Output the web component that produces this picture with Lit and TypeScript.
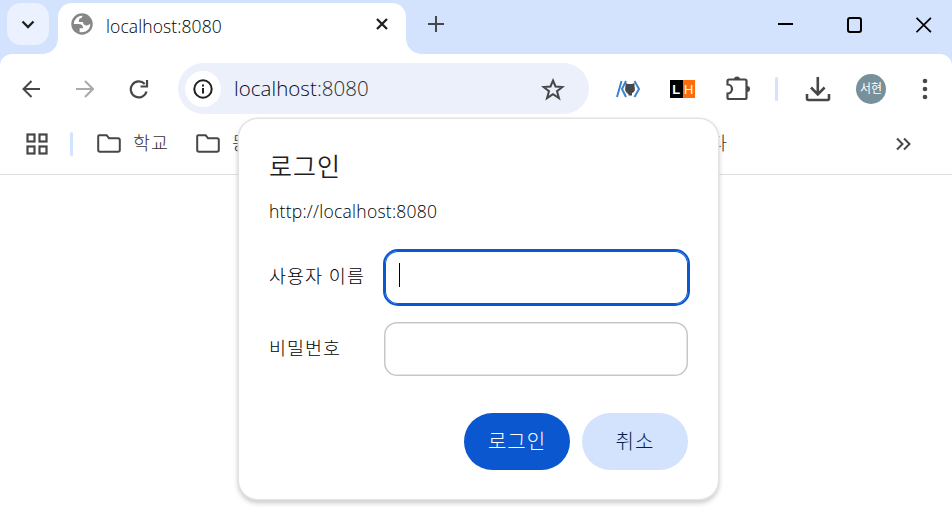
import { LitElement, html, css, svg } from "lit";
import { customElement } from "lit/decorators.js";

const folder = html`<svg class="folder" width="24" height="19" viewBox="0 0 24 19"><path d="M1.200 2.200V16q0 1.800 1.800 1.800H21q1.800 0 1.800-1.800V6q0-1.800-1.800-1.800H12L9.600 1.200H2.200Q1.200 1.200 1.200 2.200Z" fill="none" stroke="#474747" stroke-width="2"/></svg>`;

const cell = (x: number, y: number) => svg`<rect x=${x} y=${y} width="7" height="7"/>`;

@customElement("app-root")
export class AppRoot extends LitElement {
  static styles = css`
    :host { display: block; position: relative; width: 952px; height: 520px; overflow: hidden; background: #fff; color: #1f1f1f; font-family: "Open Sans", "Noto Sans CJK KR", sans-serif; font-size: 17.5px; }
    * { box-sizing: border-box; }
    svg { display: block; flex: none; }
    .strip { display: flex; height: 54px; background: #d3e2fd; padding-left: 7px; }
    .search { width: 42px; height: 42px; margin: 3px 9px 0 0; border-radius: 14px; background: #ebf1fe; display: grid; place-items: center; }
    .tab { position: relative; width: 348px; height: 51px; margin-top: 3px; border-radius: 14px 14px 0 0; background: #fff; display: flex; align-items: center; padding: 0 17px 9px 13px; }
    .tab::before, .tab::after { content: ""; position: absolute; bottom: 0; width: 15px; height: 15px; }
    .tab::before { left: -15px; background: radial-gradient(circle at 0 0, transparent 14.5px, #fff 15px); }
    .tab::after { right: -15px; background: radial-gradient(circle at 100% 0, transparent 14.5px, #fff 15px); }
    .title { flex: 1; margin-left: 13px; white-space: nowrap; margin-top: 3px; letter-spacing: .1px; color: #000; }
    .latin { font-weight: 360; }
    .plus { margin: 16px 0 0 22px; }
    .window { display: flex; gap: 54px; margin: 17px 20px 0 auto; }
    .corners { background: #d3e2fd; }
    .toolbar { display: flex; align-items: center; height: 69px; background: #fff; padding-left: 21px; border-radius: 12px 12px 0 0; }
    .nav { display: flex; gap: 33px; }
    .omni { display: flex; align-items: center; width: 411px; height: 51px; margin-left: 29px; border-radius: 26px; background: #ebf0fa; padding: 0 24px 0 7px; }
    .info { width: 36px; height: 36px; border-radius: 50%; background: #fff; display: grid; place-items: center; }
    .url { flex: 1; margin: -2px 0 0 13px; font-size: 20.5px; letter-spacing: .05px; color: #0a0a24; }
    .port { color: #303030; }
    .ext { margin-left: 27px; }
    .lh { display: flex; width: 25px; height: 18px; margin-left: 29px; font: 700 13px/20px "Liberation Sans", sans-serif; color: #fff; text-align: center; }
    .l { flex: 1; background: #000; }
    .h { flex: 1; background: #ff6d0a; font-weight: 400; }
    .puzzle { margin-left: 31px; }
    .bar { width: 3px; height: 24px; border-radius: 2px; background: #d3e2fd; }
    .toolbar .bar { margin-left: 23px; }
    .down { margin-left: 27px; }
    .avatar { width: 30px; height: 30px; border-radius: 50%; background: #78909c; color: #fff; font-size: 12px; line-height: 29px; text-align: center; margin-left: 25px; }
    .dots { margin-left: 36px; }
    .marks { display: flex; align-items: center; height: 52px; border-bottom: 1px solid #dedede; padding: 0 41px 10px 26px; color: #3a3030; font-weight: 300; font-size: 18.5px; }
    .marks .bar { margin: 0 24px 0 22px; }
    .folder { margin-right: 12px; }
    .name { width: 63px; white-space: nowrap; letter-spacing: 1px; line-height: 24px; margin-top: -2px; }
    .last { width: 20px; margin-left: auto; margin-right: 166px; }
    .dialog { position: absolute; left: 239px; top: 119px; width: 479px; height: 380px; border-radius: 19px; background: #fff; padding: 29px 30px 0; box-shadow: 0 0 0 1.5px #e3e3e3, 0 3px 5px 1px rgba(0,0,0,.22); font-weight: 300; color: #000; }
    .heading { font-size: 25px; line-height: 36px; font-weight: 350; letter-spacing: 1px; color: #1f1f1f; }
    .origin { margin-top: 15px; line-height: 24px; font-weight: 360; letter-spacing: .25px; color: #000; }
    .field { display: flex; align-items: center; height: 54px; margin-top: 17.5px; }
    .field.first { margin-top: 27.5px; }
    .label { width: 115px; font-size: 18.5px; white-space: nowrap; letter-spacing: 1px; margin-top: -5px; }
    .input { width: 304px; height: 54px; border-radius: 13px; display: flex; align-items: center; padding-left: 14px; box-shadow: inset 0 0 0 1.5px #c7c7c7; }
    .focus { width: 303px; height: 53px; margin-left: 1px; box-shadow: inset 0 0 0 1px #0b57d0, 0 0 0 2px #0b57d0; }
    .caret { width: 1px; height: 24px; background: #000; margin-top: -5px; }
    .actions { display: flex; justify-content: flex-end; gap: 12px; margin-top: 37px; }
    .button { width: 106px; height: 57px; border-radius: 29px; font-size: 20px; line-height: 57px; letter-spacing: 1px; text-align: center; background: #d3e2fd; color: #041e49; }
    .primary { background: #0b57d0; color: #fff; }
  `;

  render() {
    return html`
      <div class="strip">
        <div class="search"><svg width="14" height="9" viewBox="0 0 14 9"><path d="M1.500 1.500 7 7l5.500-5.500" fill="none" stroke="#1f1f1f" stroke-width="2.300"/></svg></div>
        <div class="tab">
          <svg width="22" height="22" viewBox="0 0 16 16"><circle cx="8" cy="8" r="7.800" fill="#868686"/><path d="M2 8h3.400c2.300.020 3.420 1.060 3.410 3.140H6.270v2.610A6 6 0 0 0 14 7.680C13.380 8.560 12.540 9 11.500 9 9.670 9 8.750 8.170 8.750 6.500h-3c-.190-1.870.470-2.800 2-2.800 0-.830.330-1.320.970-1.570A6 6 0 0 0 2 8Z" fill="#fff"/></svg>
          <span class="title latin">localhost:8080</span>
          <svg width="14" height="14" viewBox="0 0 14 14"><path d="m2 2 10 10M12 2 2 12" stroke="#1f1f1f" stroke-width="2.300"/></svg>
        </div>
        <svg class="plus" width="16" height="16" viewBox="0 0 16 16"><path d="M8 0v16M0 8h16" stroke="#474747" stroke-width="2"/></svg>
        <div class="window">
          <svg width="16" height="16" viewBox="0 0 16 16"><path d="M1 7h15" stroke="#000" stroke-width="2"/></svg>
          <svg width="15" height="16" viewBox="0 0 15 16"><rect x="1" y="1" width="13" height="14" rx="2" fill="none" stroke="#000" stroke-width="2"/></svg>
          <svg width="16" height="16" viewBox="0 0 16 16"><path d="m.5.800 14.400 14.400M14.900.800.500 15.200" stroke="#000" stroke-width="1.800"/></svg>
        </div>
      </div>
      <div class="corners"><div class="toolbar">
        <div class="nav">
          <svg width="20" height="20" viewBox="0 0 20 20"><path d="M10.500 2 2.500 10l8 8M2.500 10H19" fill="none" stroke="#474747" stroke-width="2"/></svg>
          <svg width="20" height="20" viewBox="0 0 20 20"><path d="m11 2 8 8-8 8M19 10H2" fill="none" stroke="#aaa" stroke-width="2"/></svg>
          <svg width="22" height="20" viewBox="0 0 22 20"><path d="M17.700 5A8 8 0 1 0 19.500 12.500M20 1v6.500h-6.500" fill="none" stroke="#474747" stroke-width="2.200"/></svg>
        </div>
        <div class="omni">
          <div class="info"><svg width="20" height="20" viewBox="0 0 20 20"><circle cx="10" cy="10" r="8.700" fill="none" stroke="#1f1f1f" stroke-width="2"/><path d="M10 9v5.500M10 5.500v2" stroke="#1f1f1f" stroke-width="2"/></svg></div>
          <span class="url latin">localhost<span class="port">:8080</span></span>
          <svg width="24" height="24" viewBox="0 0 24 24"><path d="m12 3.500 2.500 6 7 .5-5.500 4.200 2 7-6-4-6 4 2-7L2.500 10l7-.5Z" fill="none" stroke="#474747" stroke-width="2"/></svg>
        </div>
        <svg class="ext" width="25" height="18" viewBox="0 0 25 18"><g fill="none" stroke="#3b82cf" stroke-width="2"><path d="M5.500 1 1 17M10 1 6 9l4 8M18.500 1 23 9l-4.500 8"/></g><path d="M9.500 3 12 4h4l2.500-1V6q1.500 6-2.500 7v2.500h-3.500V14l-3-1.500 2.500.3Q8 12 9.500 6Z" fill="#474747"/></svg>
        <div class="lh"><span class="l">L</span><span class="h">H</span></div>
        <svg class="puzzle" width="26" height="26" viewBox="0 0 26 26"><path d="M3 3.500H19Q20.500 3.500 20.500 5V21.500Q20.500 23 19 23H3Q1.500 23 1.500 21.500V17.500A4 4 0 0 0 1.500 8.500V5Q1.500 3.500 3 3.500Z" fill="none" stroke="#474747" stroke-width="2.200"/><path d="M8 3.500a3 3 0 0 1 6 0ZM21 10a3 3 0 0 1 0 6Z" fill="#474747"/></svg>
        <div class="bar"></div>
        <svg class="down" width="26" height="26" viewBox="0 0 26 26"><path d="M12.800 1v17M6 11.500l6.800 6.800 6.800-6.800M2 18v4.500q0 1.500 1.500 1.500h19q1.500 0 1.500-1.500V18" fill="none" stroke="#474747" stroke-width="2.600"/></svg>
        <div class="avatar">서현</div>
        <svg class="dots" width="6" height="22" viewBox="0 0 6 22"><g fill="#474747"><circle cx="3" cy="3" r="2.300"/><circle cx="3" cy="11" r="2.300"/><circle cx="3" cy="19" r="2.300"/></g></svg>
      </div></div>
      <div class="marks">
        <svg width="22" height="22" viewBox="0 0 22 22"><g fill="none" stroke="#474747" stroke-width="2.200">${cell(1.5, 1.5)}${cell(13.5, 1.5)}${cell(1.5, 13.5)}${cell(13.5, 13.5)}</g></svg>
        <div class="bar"></div>
        ${folder}<span class="name">학교</span>
        ${folder}<span class="name">동</span>
        <span class="name last">다</span>
        <svg width="15" height="14" viewBox="0 0 15 14"><path d="m1 1.500 5.500 5.500L1 12.500M8 1.500 13.500 7 8 12.500" fill="none" stroke="#474747" stroke-width="2"/></svg>
      </div>
      <div class="dialog">
        <div class="heading">로그인</div>
        <div class="origin">http://localhost:8080</div>
        <div class="field first"><span class="label">사용자 이름</span><div class="input focus"><div class="caret"></div></div></div>
        <div class="field"><span class="label">비밀번호</span><div class="input"></div></div>
        <div class="actions"><div class="button primary">로그인</div><div class="button">취소</div></div>
      </div>`;
  }
}
